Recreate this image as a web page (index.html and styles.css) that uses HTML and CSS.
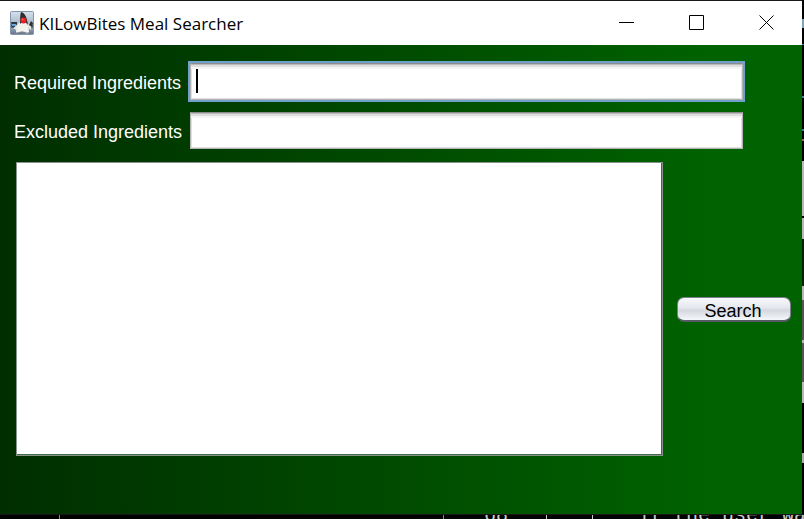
FILE: index.html
```html
<!DOCTYPE html>
<html lang="en">
<head>
<meta charset="utf-8">
<title>KILowBites Meal Searcher</title>
<link rel="stylesheet" href="styles.css">
</head>
<body>
<div class="window">
  <header class="titlebar">
    <svg class="app-icon" viewBox="0 0 24 24" aria-hidden="true">
      <defs><linearGradient id="tile" x1="0" y1="0" x2="0" y2="1"><stop offset="0" stop-color="#d5e1ed"/><stop offset=".6" stop-color="#a5b3c4"/><stop offset="1" stop-color="#65758a"/></linearGradient></defs>
      <rect x=".5" y=".5" width="23" height="23" rx="1" fill="url(#tile)" stroke="#8596ac"/>
      <path d="M1 14h6v3H1zM17 14h6v3h-6z" fill="#50647b"/>
      <path d="M1 11h6v5H2z" fill="#283744"/>
      <path d="M2 13h4v2H2z" fill="#6aa5d8"/>
      <path d="M10 11c-3 2-4 6-4 10 2 3 4-1 7 0s4 3 6 0c0-4-1-8-3-10z" fill="#f1f1ee"/>
      <path d="M8 14l-3 3 2 1M17 13l3 4 1-4" fill="none" stroke="#e8e8e4" stroke-width="2"/>
      <path d="M21 10l2 2-1 4-3-2z" fill="#34322f"/>
      <path d="M11 1c4 1 6 5 7 13-2-3-6-3-8-1 0-4 0-9 1-12z" fill="#302d2d"/>
      <path d="M4 22c3 1 5-1 8-1s5 2 8 1" fill="none" stroke="#777e84"/>
      <circle cx="13.500" cy="9.500" r="3" fill="#e32026"/>
      <circle cx="12.500" cy="8.500" r="1" fill="#ff5950"/>
    </svg>
    <h1 class="title">KILowBites Meal Searcher</h1>
    <div class="controls">
      <button class="control" aria-label="Minimize"><svg viewBox="0 0 16 16"><path d="M0 7.500h15"/></svg></button>
      <button class="control" aria-label="Maximize"><svg viewBox="0 0 16 16"><path d="M.5.5h14v14H.5z"/></svg></button>
      <button class="control" aria-label="Close"><svg viewBox="0 0 16 16"><path d="M.5.5l14 14M14.500.5l-14 14"/></svg></button>
    </div>
  </header>
  <main class="content">
    <div class="fields">
      <label for="required">Required Ingredients</label>
      <div class="field active"><input id="required" type="text"><span class="caret"></span></div>
      <label for="excluded">Excluded Ingredients</label>
      <div class="field"><input id="excluded" type="text"></div>
    </div>
    <div class="results-row">
      <textarea class="results" aria-label="Meals" readonly></textarea>
      <button class="search">Search</button>
    </div>
  </main>
</div>
<div class="side-strip"></div>
<div class="editor-strip"><span class="line-number">68</span><span class="guide"></span><span class="guide"></span><span class="code">if the user wa</span></div>
</body>
</html>
```
FILE: styles.css
```css
* { box-sizing: border-box; }
body {
  margin: 0;
  height: 100vh;
  overflow: hidden;
  display: grid;
  grid-template-columns: minmax(0, 1fr) 2px;
  grid-template-rows: minmax(0, 1fr) 5px;
  background: #000;
  font-family: "Liberation Sans", Arial, sans-serif;
  font-size: 18px;
}
.window {
  display: flex;
  flex-direction: column;
  border-top: 1px solid #18181b;
  min-height: 0;
}
.titlebar {
  flex: none;
  height: 44px;
  display: flex;
  align-items: center;
  padding-left: 10px;
  background: #fff;
}
.app-icon { width: 24px; height: 24px; }
.title {
  flex: 1;
  margin: 0 0 0 5px;
  padding-top: 2px;
  font: 17px/24px "Open Sans", "Noto Sans", sans-serif;
  color: #000;
}
.controls { display: flex; align-self: stretch; }
.control {
  width: 70px;
  padding: 0;
  border: 0;
  background: none;
  display: flex;
  align-items: center;
  justify-content: center;
}
.control svg { width: 16px; height: 16px; fill: none; stroke: #000; stroke-width: 1; }
.content {
  flex: 1;
  min-height: 0;
  display: flex;
  flex-direction: column;
  gap: 13px;
  padding: 18px 11px 58px 14px;
  background: linear-gradient(to right, #002e00, #006200 88%, #006200);
}
.fields {
  display: grid;
  grid-template-columns: auto minmax(0, 1fr);
  gap: 12px 8px;
  align-items: center;
  padding-right: 48px;
  color: #fff;
}
.fields label { padding-top: 3px; }
.field { position: relative; display: flex; }
.field input {
  width: 100%;
  height: 37px;
  padding: 4px 6px;
  border: 1px solid #b4b4b4;
  border-top-color: #8c8c8c;
  border-radius: 0;
  outline: 0;
  background: #fff;
  box-shadow: inset 0 1px #b9b9b9, inset 0 3px #dedede, inset 0 5px #f4f4f4, inset 0 0 0 1px #e0e0e0;
  font: inherit;
}
.active input {
  caret-color: transparent;
  outline: 2px solid #70a0cc;
}
.caret {
  position: absolute;
  left: 6px;
  top: 6px;
  width: 2px;
  height: 24px;
  background: #000;
}
.results-row {
  flex: 1;
  min-height: 0;
  display: flex;
  align-items: center;
  gap: 14px;
  padding-left: 2px;
}
.results {
  flex: 1;
  min-width: 0;
  height: 100%;
  resize: none;
  border: 1px solid #88918d;
  outline: 0;
  background: #fff;
  box-shadow: inset -1px -1px #3f6d45;
  font: inherit;
}
.search {
  width: 114px;
  height: 25px;
  padding: 3px 2px 0 0;
  border: 1px solid #7c828b;
  border-bottom: 2px solid #565c63;
  border-radius: 7px;
  background: linear-gradient(#f8f9fb, #e5e7ec 45%, #d4d8de 55%, #f4f8fb);
  color: #000;
  font: 18px/20px "Liberation Sans", Arial, sans-serif;
}
.side-strip {
  background: linear-gradient(#000 19px, #80a5b9 19px 28px, #000 28px 44px, #477a90 44px 45px, #000 45px 96px, #477a90 96px 98px, #000 98px 129px, #477a90 129px 131px, #000 131px 139px, #906e64 139px 141px, #000 141px 161px, #b7b7b7 161px 216px, #000 216px 218px, #b7b7b7 218px 239px, #082008 239px 286px, #b7b7b7 286px 300px, #555 300px 340px, #b7b7b7 340px 343px, #555 343px 382px, #b7b7b7 382px 403px, #000 403px 453px, #aaa 453px 463px, #000 463px);
}
.editor-strip {
  grid-column: 1 / -1;
  overflow: hidden;
  display: flex;
  border-top: 1px solid #18181b;
  padding-left: 484px;
  background:
    linear-gradient(#629aac, #629aac) 59px 0 / 1px 100% no-repeat,
    linear-gradient(#629aac, #629aac) 443px 0 / 1px 100% no-repeat,
    #000;
  color: #ccc;
  font: 20px/20px "Liberation Mono", monospace;
  white-space: pre;
}
.line-number, .code { margin-top: -9px; }
.line-number { margin-right: 38px; }
.guide { flex: none; width: 1px; margin-right: 45px; background: #ccc; }
```
